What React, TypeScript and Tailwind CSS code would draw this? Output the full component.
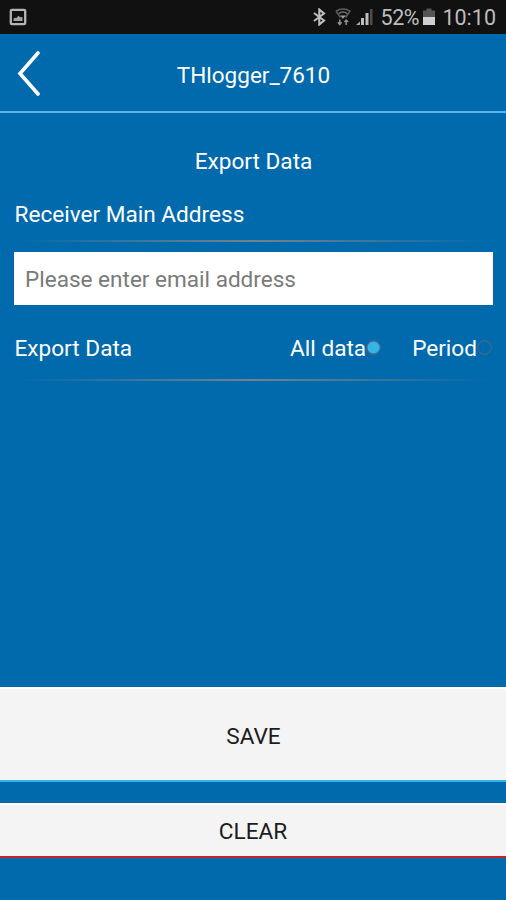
import { useState } from 'react';

type ExportMode = 'all' | 'period';

const modes: { id: ExportMode; label: string }[] = [
  { id: 'all', label: 'All data' },
  { id: 'period', label: 'Period' },
];

function StatusBar() {
  return (
    <div className="h-[34px] shrink-0 bg-[#111111] flex items-center justify-between pl-[9px] pr-[10px] text-[#bdbdbd]">
      {/* Screenshot notification */}
      <svg width="18" height="18" viewBox="0 0 18 18" fill="none">
        <rect x="1.8" y="1.8" width="14.4" height="14.4" rx="1.2" stroke="#b4b4b4" strokeWidth="2.3" />
        <path d="M4.5 13V10.8L6 9.5L7 10.3L9.5 7.8L11.3 9.3L13.5 9V13Z" fill="#a4a4a4" />
      </svg>

      <div className="flex items-center">
        {/* Bluetooth */}
        <svg width="13" height="18" viewBox="0 0 13 18" fill="none" className="mr-[10px] translate-x-[2px]">
          <path d="M1 5L11 12.5L6.3 16.5V1.5L11 5.5L1 13" stroke="#bdbdbd" strokeWidth="2.1" />
        </svg>

        {/* Wifi with transfer arrows */}
        <svg width="16" height="18" viewBox="0 0 16 18" fill="none" className="mr-[6px] translate-x-[1px]">
          <path d="M1 3.2C5 0.2 11 0.2 15 3.2L10.5 9.5" stroke="#5e5e5e" strokeWidth="1.5" />
          <path d="M1 3.2L5.5 9.5" stroke="#5e5e5e" strokeWidth="1.5" />
          <path d="M3.8 5.6C6.2 3.8 9.8 3.8 12.2 5.6" stroke="#707070" strokeWidth="1.4" />
          <path d="M5.2 7.5H10.8L8 10.8Z" fill="#a0a0a0" />
          <path d="M4.8 11.5V16.5M2.8 14.3L4.8 16.5L6.6 14.3M11.2 17V12M9.4 14L11.2 12L13.2 14" stroke="#8e8e8e" strokeWidth="1.5" />
        </svg>

        {/* Signal */}
        <svg width="17" height="18" viewBox="0 0 17 18" className="mr-[7px]">
          <path d="M0 17L4 13.5V17Z" fill="#a9a9a9" />
          <rect x="5" y="10" width="3" height="7" fill="#bdbdbd" />
          <rect x="9.5" y="5" width="3" height="12" fill="#bdbdbd" />
          <rect x="14" y="1" width="2.5" height="16" fill="#4c4c4c" />
        </svg>

        <span className="w-[40px] pt-[2px] text-[21.5px] leading-none tracking-[-0.4px] whitespace-nowrap">52%</span>

        {/* Battery */}
        <svg width="12" height="18" viewBox="0 0 12 18" className="ml-[3px] mr-[7px]">
          <path d="M3.5 0.5H8.5V2.5H12V9H0V2.5H3.5Z" fill="#555555" />
          <rect y="9" width="12" height="8" fill="#cfcfcf" />
        </svg>

        <span className="pt-[2px] text-[21.5px] leading-none whitespace-nowrap">10:10</span>
      </div>
    </div>
  );
}

function Divider() {
  return <div className="h-[2px] bg-linear-to-r from-[#74828c]/0 via-[#74828c] to-[#74828c]/0" />;
}

export default function App() {
  const [email, setEmail] = useState('');
  const [mode, setMode] = useState<ExportMode>('all');

  return (
    <div className="w-full h-screen flex flex-col overflow-hidden bg-[#006aac] font-[Roboto,sans-serif] text-white">
      <StatusBar />

      {/* Header */}
      <header className="h-[79px] shrink-0 flex items-center border-b-2 border-[#5cb6ea] px-4">
        <button aria-label="Back" className="w-10 pt-px">
          <svg width="26" height="46" viewBox="0 0 26 46" fill="none">
            <path d="M22 3L4 23.5L22 44" stroke="white" strokeWidth="3.6" strokeLinecap="round" strokeLinejoin="miter" />
          </svg>
        </button>
        <h1 className="flex-1 pr-[39px] pt-[4px] text-center text-[22.5px] leading-7">THlogger_7610</h1>
      </header>

      {/* Export form */}
      <main className="flex-1 px-[14px]">
        <h2 className="pt-[35px] pl-px text-center text-[22.6px] leading-7">Export Data</h2>

        <div className="pl-[0.5px] pt-[25px] pb-[11px] text-[22.6px] leading-7">Receiver Main Address</div>
        <Divider />

        <input
          type="email"
          placeholder="Please enter email address"
          value={email}
          onChange={(e) => setEmail(e.target.value)}
          className="mt-[10px] block h-[53px] w-[479px] bg-white px-[11px] pt-[2px] text-[22.55px] text-[#333333] outline-none placeholder:text-[#7a7a7a]"
        />

        <div className="flex items-center pl-[0.5px] pt-[30px] pb-[16px] text-[22.6px] leading-7">
          <span className="flex-1">Export Data</span>
          <div className="flex gap-[31px]">
            {modes.map((m) => (
              <button key={m.id} onClick={() => setMode(m.id)} className="flex items-center">
                {m.label}
                <svg width="15" height="15" viewBox="0 0 15 15" className="mb-[4px]">
                  <circle
                    cx="7.5"
                    cy="7.5"
                    r="6.8"
                    fill={mode === m.id ? '#35b5e5' : 'none'}
                    stroke="#3a6a8c"
                    strokeWidth="1.4"
                  />
                </svg>
              </button>
            ))}
          </div>
        </div>
        <Divider />
      </main>

      {/* Actions */}
      <div className="shrink-0 pb-[42px] text-[#1c1c1c]">
        <button className="flex h-[95px] w-full items-center justify-center border-t-2 border-b-2 border-t-white border-b-[#35b5e5] bg-[#f4f4f4] pl-px pt-[4px] text-[22.6px]">
          SAVE
        </button>
        <button className="mt-[21px] flex h-[55px] w-full items-center justify-center border-t-2 border-b-2 border-t-white border-b-[#c4222b] bg-[#f4f4f4] pt-[3px] text-[22.6px]">
          CLEAR
        </button>
      </div>
    </div>
  );
}
